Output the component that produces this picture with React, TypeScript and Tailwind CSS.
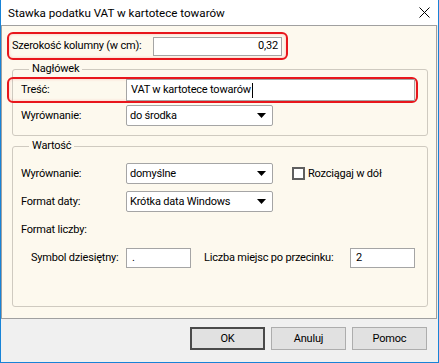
import React from "react";

const font = { fontFamily: 'Roboto, "Liberation Sans", Arial, sans-serif' };

function Arrow() {
  return (
    <svg width="9" height="5" viewBox="0 0 9 5" className="shrink-0">
      <path d="M0 0 H9 L4.5 5 Z" fill="#000" />
    </svg>
  );
}

function Select({ value }: { value: string }) {
  return (
    <div className="w-[147px] h-[21px] flex items-center justify-between pl-[3px] pr-[6px] bg-white border border-[#a5a5a5] rounded-[2px]">
      <span>{value}</span>
      <Arrow />
    </div>
  );
}

function Label({ children }: { children: React.ReactNode }) {
  return <span className="w-[105px] shrink-0">{children}</span>;
}

export default function App() {
  return (
    <div
      className="w-[439px] h-[363px] flex flex-col bg-[#f0f0f0] border-x border-b border-[#1883d7] text-[11px] leading-[16px] tracking-[-0.2px] text-black whitespace-nowrap"
      style={font}
    >
      {/* title bar */}
      <div className="h-[25px] bg-white flex items-center justify-between pl-[7px] pr-[8px] shrink-0">
        <span className="text-[11.6px] tracking-normal">Stawka podatku VAT w kartotece towarów</span>
        <svg width="11" height="11" viewBox="0 0 11 11">
          <path d="M0.5 0.5 L10.5 10.5 M10.5 0.5 L0.5 10.5" stroke="#000" strokeWidth="1" />
        </svg>
      </div>

      {/* main panel */}
      <div className="h-[294px] w-[436px] shrink-0 bg-[#fdf9ee] border border-[#a0a0a0] flex flex-col">
        {/* Szerokość */}
        <div className="mt-[6px] ml-[5px] w-[281px] h-[28px] flex items-center justify-between pl-[3px] pr-[4px] border-2 border-[#e8161c] rounded-[6px] shadow-[inset_0_0_3px_rgba(232,22,28,0.25)]">
          <span>Szerokość kolumny (w cm):</span>
          <div className="w-[129px] h-[19px] bg-white border border-[#a5a5a5] flex items-center justify-end pr-[3px]">
            0,32
          </div>
        </div>

        {/* Nagłówek */}
        <fieldset className="mt-[1px] ml-[10px] w-[416px] border border-[#cfcac0] rounded-[3px] pl-[8px] pb-[9px]">
          <legend className="ml-[8px] px-[3px]">Nagłówek</legend>
          <div className="-ml-[14px] w-[411px] h-[26px] flex items-center pl-[12px] border-2 border-[#e8161c] rounded-[6px] shadow-[inset_0_0_3px_rgba(232,22,28,0.25)]">
            <Label>Treść:</Label>
            <div className="w-[289px] h-[22px] bg-white border border-[#a5a5a5] flex items-center pl-[4px]">
              <span>VAT w kartotece towarów</span>
              <span className="w-px h-[15px] bg-black ml-px" />
            </div>
          </div>
          <div className="mt-[2px] flex items-center">
            <Label>Wyrównanie:</Label>
            <Select value="do środka" />
          </div>
        </fieldset>

        {/* Wartość */}
        <fieldset className="mt-[2px] ml-[10px] w-[416px] h-[169px] border border-[#cfcac0] rounded-[3px] pl-[8px] pt-[9px]">
          <legend className="ml-[8px] px-[3px]">Wartość</legend>
          <div className="flex items-center">
            <Label>Wyrównanie:</Label>
            <Select value="domyślne" />
            <div className="ml-[19px] w-[13px] h-[13px] border-2 border-[#5f5f5f] bg-white" />
            <span className="ml-[3px]">Rozciągaj w dół</span>
          </div>
          <div className="mt-[7px] flex items-center">
            <Label>Format daty:</Label>
            <Select value="Krótka data Windows" />
          </div>
          <div className="mt-[10px]">Format liczby:</div>
          <div className="mt-[10px] flex items-center pl-[10px]">
            <span className="w-[95px] shrink-0">Symbol dziesiętny:</span>
            <div className="w-[65px] h-[20px] bg-white border border-[#a5a5a5] flex items-center pl-[5px]">.</div>
            <span className="ml-[13px] w-[146px] shrink-0">Liczba miejsc po przecinku:</span>
            <div className="w-[65px] h-[20px] bg-white border border-[#a5a5a5] flex items-center pl-[5px]">2</div>
          </div>
        </fieldset>
      </div>

      {/* buttons */}
      <div className="flex-1 flex items-start justify-end pt-[8px] pr-[11px] gap-[6px]">
        <button className="w-[75px] h-[23px] bg-[#e1e1e1] border-2 border-[#4a4a4a] flex items-center justify-center">
          OK
        </button>
        <button className="w-[75px] h-[23px] bg-[#e1e1e1] border border-[#adadad] flex items-center justify-center">
          Anuluj
        </button>
        <button className="w-[75px] h-[23px] bg-[#e1e1e1] border border-[#adadad] flex items-center justify-center">
          Pomoc
        </button>
      </div>
    </div>
  );
}
